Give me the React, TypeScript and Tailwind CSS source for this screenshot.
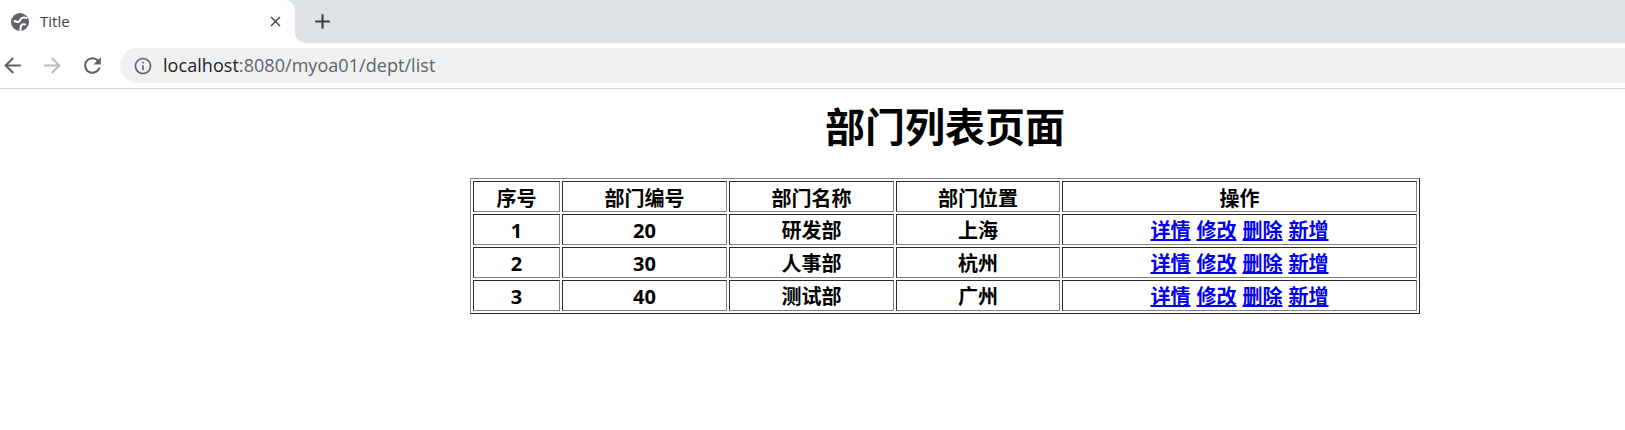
import { ReactNode } from "react"

const ROWS = [
  { no: 1, code: 20, name: "研发部", place: "上海" },
  { no: 2, code: 30, name: "人事部", place: "杭州" },
  { no: 3, code: 40, name: "测试部", place: "广州" },
]

const ACTIONS = ["详情", "修改", "删除", "新增"]

const CELL =
  "h-[31px] border border-t-[#2b2b2b] border-l-[#2b2b2b] border-r-[#808080] border-b-[#808080] px-0 pb-0 text-center align-middle font-bold"

function Icon({ d, className }: { d: string; className: string }) {
  return (
    <svg viewBox="0 0 24 24" fill="currentColor" className={className}>
      <path d={d} />
    </svg>
  )
}

function TabBar() {
  return (
    <div className="flex h-[43px] bg-white">
      <div className="bg-[#dee1e6]">
        <div className="flex h-[43px] w-[295px] items-center rounded-tr-[10px] bg-white pl-[10px]">
          <svg viewBox="0 0 20 20" className="h-[20px] w-[20px]">
            <circle cx="10" cy="10" r="9" fill="#5f6368" />
            <path
              d="M16.500 6C13 4.800 10.800 6.500 10 8.500 9 10.500 7 10.200 4.500 9M15 12.500C12.500 11.500 10.800 13 10.800 15L10.300 18"
              fill="none"
              stroke="#ffffff"
              strokeWidth="2"
              strokeLinecap="round"
            />
          </svg>
          <span className="ml-[10px] flex-1 text-[15px] text-[#3c4043]">Title</span>
          <Icon
            className="mr-[11px] mb-[1px] h-[17px] w-[17px] text-[#3c4043]"
            d="M19 6.41 17.59 5 12 10.59 6.41 5 5 6.41 10.59 12 5 17.59 6.41 19 12 13.41 17.59 19 19 17.59 13.41 12z"
          />
        </div>
      </div>
      <div className="flex flex-1 items-center rounded-bl-[10px] bg-[#dee1e6] pb-[1px] pl-[15px]">
        <Icon className="h-[25px] w-[25px] text-[#3c4043]" d="M19 13h-6v6h-2v-6H5v-2h6V5h2v6h6v2z" />
      </div>
    </div>
  )
}

function ToolBar() {
  return (
    <div className="flex h-[46px] items-center border-b border-[#d5d5d5] bg-white">
      <Icon
        className="h-[25px] w-[25px] text-[#5f6368]"
        d="M20 11H7.83l5.59-5.59L12 4l-8 8 8 8 1.41-1.41L7.83 13H20v-2z"
      />
      <Icon
        className="ml-[15px] h-[25px] w-[25px] rotate-180 text-[#babcbe]"
        d="M20 11H7.83l5.59-5.59L12 4l-8 8 8 8 1.41-1.41L7.83 13H20v-2z"
      />
      <Icon
        className="ml-[15px] h-[25px] w-[25px] text-[#5f6368]"
        d="M17.65 6.35C16.2 4.9 14.21 4 12 4c-4.42 0-7.99 3.58-7.99 8s3.57 8 7.99 8c3.73 0 6.84-2.55 7.73-6h-2.08c-.82 2.33-3.04 4-5.65 4-3.31 0-6-2.69-6-6s2.69-6 6-6c1.66 0 3.14.69 4.22 1.78L13 11h7V4l-2.35 2.35z"
      />
      <div className="ml-[15px] flex h-[35px] flex-1 items-center rounded-l-full bg-[#eff0f2] pl-[13px]">
        <Icon
          className="h-[20px] w-[20px] text-[#5f6368]"
          d="M11 7h2v2h-2zm0 4h2v6h-2zm1-9C6.48 2 2 6.48 2 12s4.48 10 10 10 10-4.48 10-10S17.52 2 12 2zm0 18c-4.41 0-8-3.59-8-8s3.59-8 8-8 8 3.59 8 8-3.59 8-8 8z"
        />
        <span className="ml-[10px] text-[18px] tracking-[0.05px] text-[#5f6368]">
          <span className="text-[#202124]">localhost</span>:8080/myoa01/dept/list
        </span>
      </div>
    </div>
  )
}

function Th({ width, children }: { width: string; children: ReactNode }) {
  return <th className={`${CELL} ${width} pt-[4px] leading-[25px]`}>{children}</th>
}

function Td({ children }: { children: ReactNode }) {
  return <td className={`${CELL} pt-[2px]`}>{children}</td>
}

export default function App() {
  return (
    <div className="h-[430px] overflow-hidden bg-white font-['Open_Sans','Noto_Sans_CJK_SC',sans-serif]">
      <TabBar />
      <ToolBar />
      <div className="ml-[470px] w-[950px] text-black">
        <h1 className="mt-[11px] mb-[24px] text-center text-[40px] leading-[54px] font-bold">部门列表页面</h1>
        <table className="w-full table-fixed border-separate border-spacing-[2px] border border-t-[#808080] border-l-[#808080] border-r-[#2b2b2b] border-b-[#2b2b2b] text-[20px] leading-[27px]">
          <thead>
            <tr>
              <Th width="w-[87px]">序号</Th>
              <Th width="w-[165px]">部门编号</Th>
              <Th width="w-[165px]">部门名称</Th>
              <Th width="w-[164px]">部门位置</Th>
              <Th width="w-auto">操作</Th>
            </tr>
          </thead>
          <tbody>
            {ROWS.map((row) => (
              <tr key={row.no}>
                <Td>{row.no}</Td>
                <Td>{row.code}</Td>
                <Td>{row.name}</Td>
                <Td>{row.place}</Td>
                <Td>
                  <span className="inline-flex justify-center gap-[6px]">
                    {ACTIONS.map((action) => (
                      <a key={action} href="#" className="text-[#0000ee] underline">
                        {action}
                      </a>
                    ))}
                  </span>
                </Td>
              </tr>
            ))}
          </tbody>
        </table>
      </div>
    </div>
  )
}
